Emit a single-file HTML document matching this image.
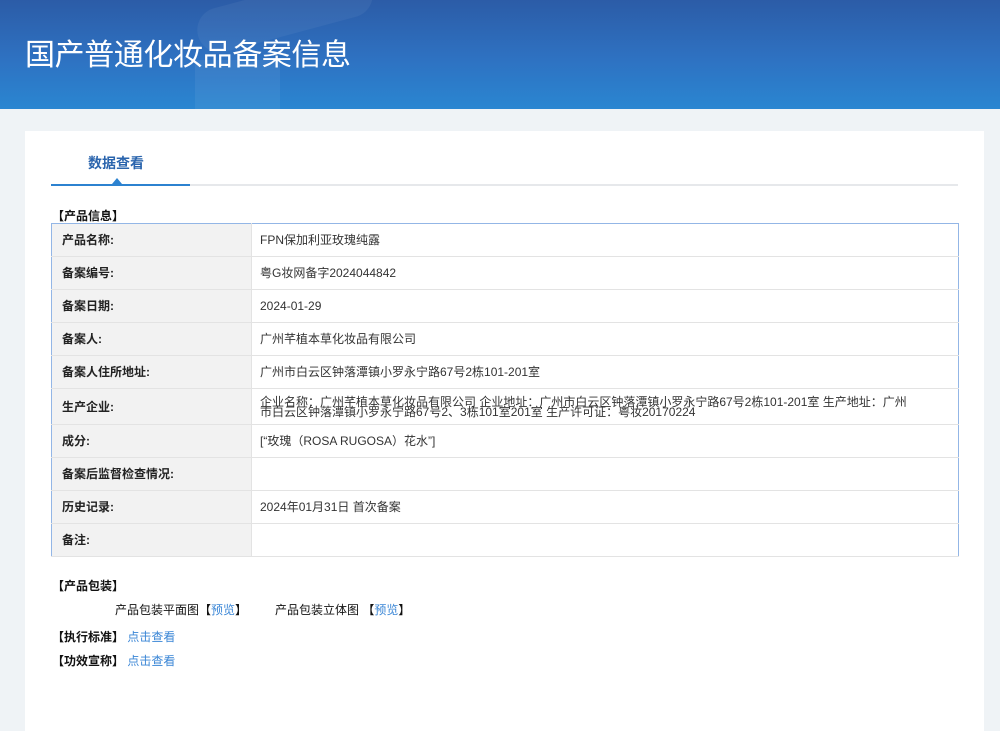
<!DOCTYPE html>
<html><head><meta charset="utf-8"><style>
*{margin:0;padding:0;box-sizing:border-box}
body{width:1000px;height:695px;overflow:hidden;background:#eff3f6;font-family:"Liberation Sans","Noto Sans CJK SC",sans-serif;font-size:12px;color:#333}
.hd{position:absolute;left:0;top:0;width:1000px;height:109px;background:linear-gradient(180deg,#2c5ca7 0%,#2e72c2 55%,#2a86d1 100%);overflow:hidden}
.hd h1{position:absolute;left:25px;top:30px;font-size:30px;font-weight:normal;color:#fff;letter-spacing:-0.4px}
.card{position:absolute;left:25px;top:131px;width:959px;height:600px;background:#fff}
.tab{position:absolute;left:63px;top:22px;font-size:14px;color:#2a64ad;font-weight:bold}
.line{position:absolute;left:26px;top:53px;width:907px;height:2px;background:#e6e8eb}
.line i{position:absolute;left:0;top:0;width:139px;height:2px;background:#2c82d0}
.tri{position:absolute;left:87px;top:47px;width:0;height:0;border-left:5px solid transparent;border-right:5px solid transparent;border-bottom:6px solid #2c82d0}
.sec{position:absolute;left:27px;font-size:12px;color:#111;font-weight:bold}
table{position:absolute;left:26px;top:92px;width:908px;border-collapse:collapse;border:1px solid #93b6e6}
td{border-bottom:1px solid #e3e3e3;height:33px;padding:0 8px;font-size:12px;line-height:12px}
td.l{width:200px;background:#f2f2f2;font-weight:bold;color:#222;padding-left:10px;border-right:1px solid #e3e3e3}
a{color:#3a86d6;text-decoration:none}
</style></head><body>
<div class="hd">
<div style="position:absolute;left:195px;top:60px;width:85px;height:60px;background:rgba(255,255,255,.06)"></div>
<div style="position:absolute;left:195px;top:-10px;width:180px;height:45px;border-radius:25px;background:rgba(255,255,255,.05);transform:rotate(-15deg)"></div>
<h1>国产普通化妆品备案信息</h1></div>
<div class="card">
<div class="tab">数据查看</div>
<div class="line"><i></i></div><div class="tri"></div>
<div class="sec" style="top:76px">【产品信息】</div>
<table>
<tr><td class="l">产品名称:</td><td>FPN保加利亚玫瑰纯露</td></tr>
<tr><td class="l">备案编号:</td><td>粤G妆网备字2024044842</td></tr>
<tr><td class="l">备案日期:</td><td>2024-01-29</td></tr>
<tr><td class="l">备案人:</td><td>广州芊植本草化妆品有限公司</td></tr>
<tr><td class="l">备案人住所地址:</td><td>广州市白云区钟落潭镇小罗永宁路67号2栋101-201室</td></tr>
<tr><td class="l" style="height:36px">生产企业:</td><td style="line-height:10px;padding-right:40px">企业名称：广州芊植本草化妆品有限公司 企业地址：广州市白云区钟落潭镇小罗永宁路67号2栋101-201室 生产地址：广州市白云区钟落潭镇小罗永宁路67号2、3栋101室201室 生产许可证：粤妆20170224</td></tr>
<tr><td class="l">成分:</td><td>[“玫瑰（ROSA RUGOSA）花水”]</td></tr>
<tr><td class="l">备案后监督检查情况:</td><td></td></tr>
<tr><td class="l">历史记录:</td><td>2024年01月31日 首次备案</td></tr>
<tr><td class="l">备注:</td><td></td></tr>
</table>
<div class="sec" style="top:446px">【产品包装】</div>
<div style="position:absolute;left:90px;top:470px;color:#111">产品包装平面图【<a>预览</a>】</div>
<div style="position:absolute;left:250px;top:470px;color:#111">产品包装立体图 【<a>预览</a>】</div>
<div class="sec" style="top:497px">【执行标准】 <a style="font-weight:normal">点击查看</a></div>
<div class="sec" style="top:521px">【功效宣称】 <a style="font-weight:normal">点击查看</a></div>
</div>
</body></html>
